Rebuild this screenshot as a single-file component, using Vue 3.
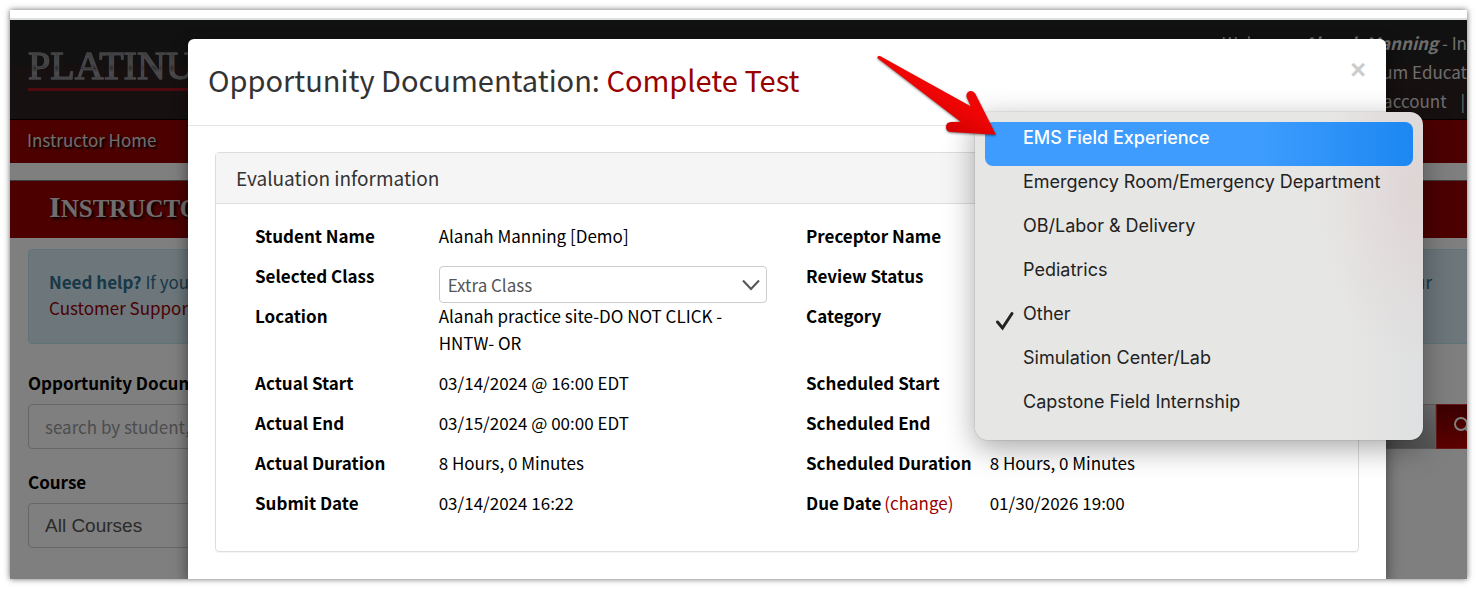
<script setup>
import { ref } from 'vue'

const busca = ref('')
const classe = ref('Extra Class')
const curso = ref('All Courses')
const categoria = ref('Other')
const destaque = ref('EMS Field Experience')

const categorias = [
  'EMS Field Experience',
  'Emergency Room/Emergency Department',
  'OB/Labor & Delivery',
  'Pediatrics',
  'Other',
  'Simulation Center/Lab',
  'Capstone Field Internship'
]
</script>

<template>
  <div class="frame">
    <div class="strip"></div>

    <div class="stack">
      <div class="page">
        <header class="header">
          <div class="logo"><span>PLATINUM</span></div>
          <div class="user">
            <span>Welcome, <b><i>Alanah Manning</i></b> - In</span>
            <span>Platinum Educat</span>
            <span>My account <span class="sep">|</span></span>
          </div>
        </header>
        <nav class="nav"><a href="#">Instructor Home</a></nav>
        <h1 class="title">Instructor</h1>

        <div class="content">
          <div class="alert">
            <p><span><b>Need help?</b> If you</span><span>your</span></p>
            <p><a href="#">Customer Support</a></p>
          </div>

          <label for="busca">Opportunity Documentation</label>
          <div class="group">
            <input id="busca" v-model="busca" type="text" placeholder="search by student, site" />
            <button class="btn-clear" type="button" aria-label="Clear"></button>
            <button class="btn-search" type="button" aria-label="Search">
              <svg width="18" height="18" viewBox="0 0 18 18" aria-hidden="true">
                <circle cx="7" cy="7" r="6" fill="none" stroke="#fff" stroke-width="2" />
                <path d="M11.5 11.5L17 17" stroke="#fff" stroke-width="2" />
              </svg>
            </button>
          </div>

          <label for="curso">Course</label>
          <select id="curso" v-model="curso" class="course">
            <option>All Courses</option>
          </select>
        </div>
      </div>

      <div class="backdrop"></div>

      <section class="modal" role="dialog" aria-labelledby="modal-title">
        <div class="modal-header">
          <h2 id="modal-title">Opportunity Documentation: <span>Complete Test</span></h2>
          <button class="close" type="button" aria-label="Close">×</button>
        </div>

        <div class="modal-body">
          <div class="panel">
            <h3>Evaluation information</h3>
            <dl>
              <dt>Student Name</dt>
              <dd>Alanah Manning [Demo]</dd>
              <dt>Preceptor Name</dt>
              <dd></dd>

              <dt><label for="classe">Selected Class</label></dt>
              <dd class="field">
                <select id="classe" v-model="classe">
                  <option>Extra Class</option>
                </select>
                <svg class="chevron" width="18" height="12" viewBox="0 0 18 12" aria-hidden="true">
                  <path d="M1 1.5L9 10L17 1.5" fill="none" stroke="#555" stroke-width="2" />
                </svg>
              </dd>
              <dt>Review Status</dt>
              <dd></dd>

              <dt>Location</dt>
              <dd>Alanah practice site-DO NOT CLICK - HNTW- OR</dd>
              <dt>Category</dt>
              <dd></dd>

              <dt>Actual Start</dt>
              <dd>03/14/2024 @ 16:00 EDT</dd>
              <dt>Scheduled Start</dt>
              <dd></dd>

              <dt>Actual End</dt>
              <dd>03/15/2024 @ 00:00 EDT</dd>
              <dt>Scheduled End</dt>
              <dd></dd>

              <dt>Actual Duration</dt>
              <dd>8 Hours, 0 Minutes</dd>
              <dt>Scheduled Duration</dt>
              <dd>8 Hours, 0 Minutes</dd>

              <dt>Submit Date</dt>
              <dd>03/14/2024 16:22</dd>
              <dt class="due">Due Date<a href="#">(change)</a></dt>
              <dd>01/30/2026 19:00</dd>
            </dl>
          </div>
        </div>
      </section>

      <div class="menu" role="listbox" aria-label="Category">
        <button
          v-for="item in categorias"
          :key="item"
          type="button"
          role="option"
          :aria-selected="item === categoria"
          :class="{ active: item === destaque }"
          @mouseenter="destaque = item"
          @click="categoria = item"
        >
          <svg v-if="item === categoria" class="check" width="20" height="20" viewBox="0 0 20 20" aria-hidden="true">
            <path d="M2.5 11L7.5 17L17 2.5" fill="none" stroke="#222" stroke-width="3" stroke-linecap="round" stroke-linejoin="miter" />
          </svg>
          {{ item }}
        </button>
      </div>

      <svg class="arrow" width="132" height="90" viewBox="60 150 396 270" aria-hidden="true">
        <defs>
          <linearGradient id="red" gradientUnits="userSpaceOnUse" x1="330" y1="270" x2="270" y2="390">
            <stop offset="0.3" stop-color="#f00505" />
            <stop offset="1" stop-color="#cf0000" />
          </linearGradient>
        </defs>
        <path
          d="M90 168L362 319L350 292Q347 277 360 273Q370 271 376 281L438 404L302 396Q288 394 288 380Q289 367 303 366L332 365L83 175Q80 167 90 168Z"
          fill="url(#red)"
        />
      </svg>
    </div>
  </div>
</template>

<style>
body {
  margin: 0;
  background: #fff;
}
</style>

<style scoped>
* {
  box-sizing: border-box;
}

.frame {
  margin: 10px;
  overflow: hidden;
  box-shadow: 0 0 6px rgba(0, 0, 0, 0.6);
  font-family: 'Noto Sans CJK SC', 'Open Sans', sans-serif;
  font-size: 17px;
  line-height: 27px;
  color: #000;
}

.strip {
  height: 10px;
  background: #fff;
  border-bottom: 2px solid #dde1de;
}

.stack {
  display: grid;
  position: relative;
}

.page,
.backdrop,
.modal {
  grid-area: 1 / 1;
  min-width: 0;
}

.backdrop {
  background: rgba(0, 0, 0, 0.5);
}

.page {
  overflow: hidden;
  background: #fff;
}

a {
  color: #900;
  text-decoration: none;
}

.header {
  height: 100px;
  padding: 8px 0 0 18px;
  display: flex;
  justify-content: space-between;
  align-items: flex-start;
  background: linear-gradient(#222 0%, #222 40%, #2e2020 50%, #2e2020 100%);
  border-bottom: 1px solid #0a0000;
}

.logo {
  margin-top: 16px;
  width: 220px;
  border-bottom: 3px solid #a3141e;
  font: 40px/44px 'Liberation Serif', serif;
}

.logo span {
  display: block;
  background: linear-gradient(#777 20%, #8d8d92 45%, #55555a 55%, #9a9aa0 65%, #77777c 85%);
  background-clip: text;
  color: transparent;
  -webkit-text-stroke: 1px #8d8d92;
}

.user {
  display: flex;
  flex-direction: column;
  align-items: flex-end;
  line-height: 29px;
  color: #ddd;
  white-space: nowrap;
}

.sep {
  margin: 0 2px 0 10px;
}

.nav {
  height: 43px;
  padding: 0 17px;
  line-height: 40px;
  background: #900;
}

.nav a {
  color: #ddd;
  text-shadow: 2px 2px 2px #000;
}

.title {
  margin: 17px 0 0;
  padding-left: 39px;
  height: 58px;
  background: #900;
  border-top: 1px solid #777;
  font: bold 25px/51px 'Liberation Serif', serif;
  text-transform: uppercase;
  color: #ddd;
  text-shadow: 2px 2px 3px #000;
}

.title::first-letter {
  font-size: 30px;
}

.content {
  margin: 11px -20px 0 18px;
}

.alert {
  height: 95px;
  margin-bottom: 25px;
  padding: 19px 54px 19px 20px;
  background: #d9edf7;
  border: 1px solid #bce8f1;
  border-radius: 4px;
  color: #31708f;
}

.alert p {
  margin: 0;
  display: flex;
  justify-content: space-between;
  line-height: 26px;
}

.content label {
  display: block;
  font-weight: bold;
  margin-bottom: 8px;
}

.group {
  display: flex;
  margin-bottom: 19px;
}

.group input,
.course {
  height: 45px;
  padding: 0 16px;
  background: #fff;
  border: 1px solid #ccc;
  border-radius: 4px;
  font: inherit;
}

.group input {
  flex: 1;
}

.group input::placeholder {
  color: #999;
}

.btn-clear {
  width: 90px;
  background: linear-gradient(#ddd, #aaa);
  border: 1px solid #bbb;
}

.btn-search {
  width: 51px;
  padding: 2px 0 0 17px;
  text-align: left;
  background: linear-gradient(#700, #b00);
  border: 1px solid #c33;
}

.course {
  appearance: none;
  display: block;
  width: 50%;
  color: #555;
  font-family: 'Liberation Sans', Arial, sans-serif;
  font-size: 19px;
}

.modal {
  position: relative;
  margin: 19px 81px 0 178px;
  background: #fff;
  border-radius: 6px 6px 0 0;
  box-shadow: 0 5px 15px rgba(0, 0, 0, 0.5);
}

.modal-header {
  display: flex;
  justify-content: space-between;
  align-items: flex-start;
  height: 87px;
  padding: 20px;
  border-bottom: 1px solid #e5e5e5;
}

.modal-header h2 {
  margin: 0;
  font-size: 29px;
  font-weight: normal;
  line-height: 41px;
  color: #333;
}

.modal-header h2 span {
  color: #900;
}

.close {
  padding: 0;
  border: 0;
  background: none;
  font: bold 27px/22px 'Liberation Sans', sans-serif;
  color: #ccc;
}

.modal-body {
  padding: 26px 27px 27px;
}

.panel {
  border: 1px solid #ddd;
  border-radius: 4px;
  box-shadow: 0 1px 1px rgba(0, 0, 0, 0.05);
}

.panel h3 {
  margin: 0;
  padding: 0 20px;
  height: 51px;
  background: #f5f5f5;
  border-bottom: 1px solid #ddd;
  font-size: 19px;
  font-weight: normal;
  line-height: 50px;
  color: #333;
}

dl {
  display: grid;
  grid-template-columns: 2fr 4fr 2fr 4fr;
  margin: 0;
  padding: 18px 16px 22px 24px;
}

dt,
dd {
  margin: 0;
  padding: 0 0 13px 15px;
  min-width: 0;
}

dt {
  font-weight: bold;
  white-space: nowrap;
}

dd {
  padding-right: 24px;
}

.due a {
  margin-left: 3px;
  font-weight: normal;
}

.field {
  display: flex;
  align-items: flex-start;
  height: 40px;
  padding-top: 4px;
  padding-bottom: 0;
}

.field select {
  appearance: none;
  width: 100%;
  height: 37px;
  padding: 0 8px;
  background: #fff;
  border: 1px solid #ccc;
  border-radius: 4px;
  font: inherit;
  line-height: 33px;
  color: #555;
}

.chevron {
  flex: none;
  margin: 13px 7px 0 -25px;
  pointer-events: none;
}

.menu {
  position: absolute;
  top: 92px;
  right: 44px;
  display: flex;
  flex-direction: column;
  width: 448px;
  padding: 10px;
  border-radius: 13px;
  background:
    radial-gradient(ellipse 110px 170px at 100% 24%, rgba(220, 190, 190, 0.35), transparent),
    linear-gradient(90deg, #e6e6e4 82%, #dfe0e1);
  box-shadow: 0 0 1px rgba(0, 0, 0, 0.6), 0 8px 30px rgba(0, 0, 0, 0.35);
}

.menu button {
  position: relative;
  height: 44px;
  padding: 0 0 12px 38px;
  border: 0;
  border-radius: 8px;
  background: none;
  font: 18px/32px Inter, sans-serif;
  text-align: left;
  white-space: nowrap;
  color: #222;
}

.menu .active {
  background: linear-gradient(90deg, #3d9cfd 65%, #1c87f2);
  color: #fff;
  font-weight: 500;
}

.check {
  position: absolute;
  left: 10px;
  top: 13px;
}

.arrow {
  position: absolute;
  top: 30px;
  right: 465px;
  filter: drop-shadow(0 1px 1px rgba(0, 0, 0, 0.5));
}
</style>
